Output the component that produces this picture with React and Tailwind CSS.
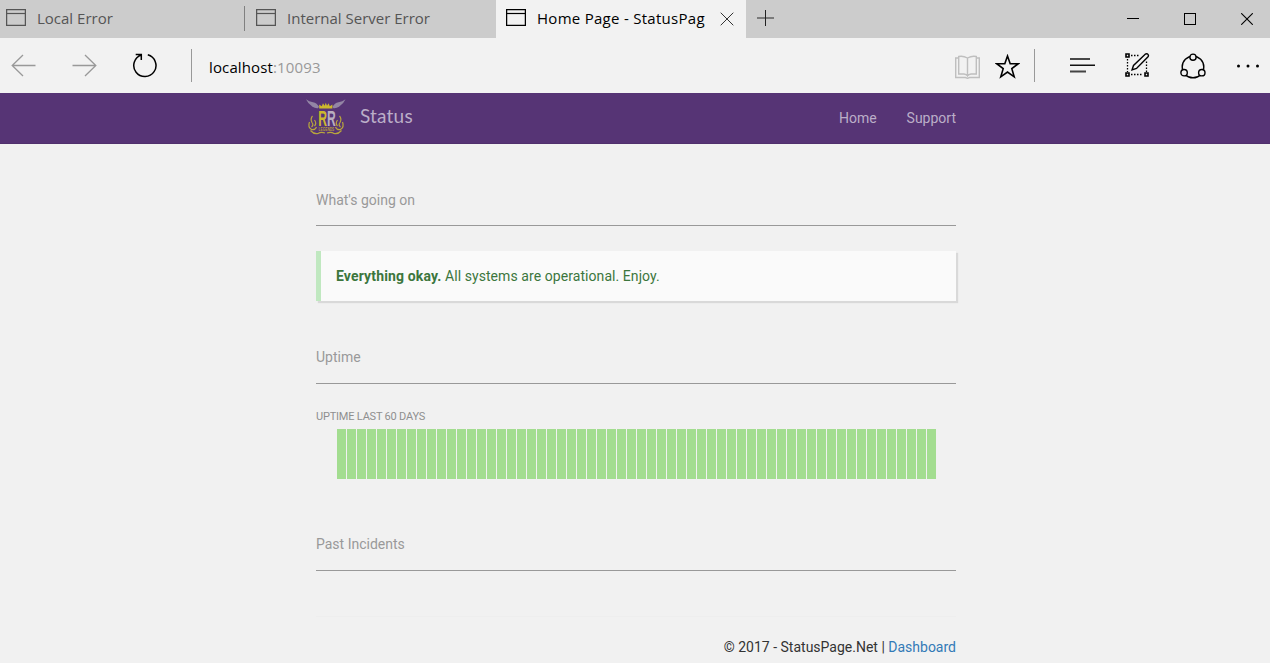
import React from 'react';

const WindowIcon = ({ className }) => (
  <svg className={className} width="20" height="17" viewBox="0 0 20 17" fill="none" stroke="currentColor">
    <rect x="0.6" y="0.6" width="18.8" height="15.8" strokeWidth="1.3" />
    <path d="M0 4.5H20" strokeWidth="1.2" />
  </svg>
);

function TabBar() {
  return (
    <div className="flex h-[38px] bg-[#cccccc] text-[15px] leading-[36px] text-[#555555]">
      <div className="flex w-[245px] items-start">
        <WindowIcon className="ml-[6px] mt-[9px] shrink-0" />
        <span className="ml-[11px] whitespace-nowrap">Local Error</span>
        <div className="ml-auto mt-[6px] h-[25px] w-px bg-[#808080]" />
      </div>
      <div className="flex w-[251px] items-start">
        <WindowIcon className="ml-[11px] mt-[9px] shrink-0" />
        <span className="ml-[11px] whitespace-nowrap">Internal Server Error</span>
      </div>
      <div className="flex w-[250px] items-start bg-[#f2f2f2] text-black">
        <WindowIcon className="ml-[10px] mt-[9px] shrink-0" />
        <span className="ml-[11px] w-[169px] overflow-hidden whitespace-nowrap tracking-[0.28px]">Home Page - StatusPag</span>
        <svg className="ml-[14px] mt-[12px] shrink-0" width="14" height="14" viewBox="0 0 14 14" stroke="#333">
          <path d="M.7 .7L13.3 13.3M13.3 .7L.7 13.3" />
        </svg>
      </div>
      <svg className="ml-[11px] mt-[10px]" width="17" height="16" viewBox="0 0 17 16" stroke="#333">
        <path d="M0 8H17" stroke="#666" strokeWidth="1.6" />
        <path d="M8.5 0V16" stroke="#222" />
      </svg>
      <div className="ml-auto flex items-center pr-[17px] text-black">
        <svg width="12" height="12" viewBox="0 0 12 12" stroke="currentColor"><path d="M0 5.5H12" /></svg>
        <svg className="ml-[45px]" width="12" height="12" viewBox="0 0 12 12" fill="none" stroke="currentColor">
          <rect x=".5" y=".5" width="11" height="11" />
        </svg>
        <svg className="ml-[45px]" width="12" height="12" viewBox="0 0 12 12" stroke="currentColor" strokeWidth="1.1">
          <path d="M.2 .2L11.8 11.8M11.8 .2L.2 11.8" />
        </svg>
      </div>
    </div>
  );
}

function Toolbar() {
  return (
    <div className="flex h-[55px] items-center bg-[#f2f2f2]">
      <svg className="ml-[11px]" width="25" height="23" viewBox="0 0 25 23" fill="none" stroke="#999" strokeWidth="1.3">
        <path d="M24.5 11.5H1.2M12 1L1.2 11.5L12 22" />
      </svg>
      <svg className="ml-9" width="25" height="23" viewBox="0 0 25 23" fill="none" stroke="#999" strokeWidth="1.3">
        <path d="M.5 11.5H23.8M13 1L23.8 11.5L13 22" />
      </svg>
      <svg className="ml-[35px]" width="26" height="26" viewBox="0 0 26 26" fill="none" stroke="#000" strokeWidth="1.5">
        <path d="M15.8 1.8A11.1 11.1 0 1 1 9.3 2M3.7 1.5H9.3V7" />
      </svg>
      <div className="ml-[33px] h-[33px] w-px bg-[#999999]" />
      <div className="ml-[17px] mt-[3px] text-[15px] leading-5 tracking-[0.13px] text-[#999999]">
        <span className="text-black">localhost</span>:10093
      </div>
      <div className="ml-auto flex items-center">
        <svg className="mt-[2px]" width="25" height="24" viewBox="0 0 25 24" fill="none" stroke="#bfbfbf" strokeWidth="1.4">
          <path d="M3.5 3H.7V22.5H10.5L12.5 23.3L14.5 22.5H24.3V3H21.5" />
          <path d="M12.5 3Q8 .5 3.7 1.5V19H9Q11.5 19.3 12.5 21Q13.5 19.3 16 19H21.3V1.5Q17 .5 12.5 3ZM12.5 3V21" />
        </svg>
        <svg className="ml-[15px] mt-[2px]" width="25" height="25" viewBox="0 0 25 25" fill="none" stroke="#000" strokeWidth="1.6">
          <path d="M12.5 2L15.2 9.7H23.3L16.8 14.6L19.2 22.8L12.5 18L5.8 22.8L8.2 14.6L1.7 9.7H9.8Z" />
        </svg>
        <div className="ml-[14px] h-[33px] w-px bg-[#999999]" />
        <svg className="ml-[35px] mt-[-1px]" width="25" height="17" viewBox="0 0 25 17" stroke="#111" strokeWidth="1.6">
          <path d="M0 2H20M0 8.3H25" /><path d="M0 14.5H16" stroke="#444" strokeWidth="2" />
        </svg>
        <svg className="ml-[30px]" width="25" height="25" viewBox="0 0 25 25" fill="none" stroke="#000">
          <path d="M6 2.5H15M2.5 6V19M6 21.5H18M21.5 8.5V19" strokeDasharray="1.5 1.5" strokeWidth="1.3" />
          <path d="M1 1H4V4H1ZM1 20H4V23H1ZM20 20H23V23H20Z" strokeWidth="1.6" />
          <path d="M7 17L8.5 12.5L20.2 1.2Q22 .2 23 1.4Q24 2.5 22.8 4L11.5 15.5Z" strokeWidth="1.4" fill="#f2f2f2" />
        </svg>
        <svg className="ml-[30px]" width="26" height="26" viewBox="0 0 26 26" fill="none" stroke="#000" strokeWidth="1.4">
          <circle cx="13" cy="14" r="10.8" />
          <g fill="#f2f2f2"><circle cx="13" cy="4.2" r="3.1" /><circle cx="4.1" cy="19.7" r="3.2" /><circle cx="21.8" cy="19.7" r="3.2" /></g>
        </svg>
        <svg className="ml-[30px] mr-[10px]" width="24" height="4" viewBox="0 0 24 4">
          <circle cx="2.5" cy="2" r="1.5" /><circle cx="12" cy="2" r="1.5" /><circle cx="21.5" cy="2" r="1.5" />
        </svg>
      </div>
    </div>
  );
}

function Logo() {
  return (
    <svg width="40" height="37" viewBox="0 0 40 37">
      <g fill="#9385a5">
        <path d="M0 .3Q3 2.8 7 3.2Q11 4 13 7.8L12 9.2Q9 9.5 6.5 7.8Q2 5 0 .3Z" />
        <path d="M39.5 .3Q36.5 2.8 32.5 3.2Q28.5 4 26.5 7.8L27.5 9.2Q30.5 9.5 33 7.8Q37.5 5 39.5 .3Z" />
      </g>
      <path d="M13.2 9.5V5.5L15.8 7.3L17 4.3L18.6 6.7L19.8 3.8L21 6.7L22.6 4.3L23.8 7.3L26.4 5.5V9.5Z" fill="#ccb82e" />
      <text x="12.2" y="26.5" fontFamily="Liberation Sans" fontWeight="700" fontSize="22.5" textLength="17.5" lengthAdjust="spacingAndGlyphs" fill="#ccb82e">
        R<tspan fill="#b9aebf">R</tspan>
      </text>
      <text x="12.6" y="31.8" fontFamily="Liberation Sans" fontWeight="700" fontSize="5.8" textLength="15.6" lengthAdjust="spacingAndGlyphs" fill="#b59e3d">LEGENDS</text>
      <g fill="none" stroke="#b8a63c" strokeWidth="1.2">
        <path d="M6.5 17Q4 20 6 23.5Q8 26 5.5 28M3.5 23Q1.5 28 5.5 30.5Q9 31.5 10.5 28M8.5 21Q11 24.5 8.5 27M4.5 31.5Q8 35.5 12 34.5Q15 32.5 19 34" />
        <path d="M33.5 17Q36 20 34 23.5Q32 26 34.5 28M36.5 23Q38.5 28 34.5 30.5Q31 31.5 29.5 28M31.5 21Q29 24.5 31.5 27M35.5 31.5Q32 35.5 28 34.5Q25 32.5 21 34" />
      </g>
    </svg>
  );
}

const SectionTitle = ({ children }) => (
  <h2 className="h-[37px] border-b border-[#999999] text-[14px] leading-5 text-[#999999]">{children}</h2>
);

export default function App() {
  return (
    <div className="h-[663px] w-[1270px] overflow-hidden bg-[#f1f1f1] font-['Open_Sans',sans-serif]">
      <TabBar />
      <Toolbar />
      <div className="font-['Roboto',sans-serif] text-[14px] leading-5">
        <nav className="flex h-[51px] items-start border-b border-[#50306d] bg-[#563475] pl-[306px] pr-[314px] pt-[6px] text-[#bbaec8]">
          <Logo />
          <span className="ml-[14px] mt-[4px] font-['Lato',sans-serif] text-[19px] leading-[26px] tracking-[0.2px]">Status</span>
          <div className="ml-auto mt-[9px] flex gap-[30px]">
            <a>Home</a>
            <a>Support</a>
          </div>
        </nav>
        <main className="ml-[316px] w-[640px] pt-[46px]">
          <h2 className="h-[36px] border-b border-[#999999] text-[14px] leading-5 text-[#999999]">What's going on</h2>
          <div className="mt-[25px] h-[50px] border-l-[5px] border-[#c0e8c0] bg-[#fafafa] pl-[15px] pt-[15px] tracking-[0.07px] text-[#3c763d] shadow-[2px_2px_1px_#d9d9d9]">
            <strong className="font-bold tracking-[0.15px]">Everything okay.</strong> All systems are operational. Enjoy.
          </div>
          <div className="mt-[46px]"><SectionTitle>Uptime</SectionTitle></div>
          <div className="mt-[25px] text-[11px] leading-4 tracking-[-0.2px] text-[#8f8f8f]">UPTIME LAST 60 DAYS</div>
          <div className="ml-[21px] mt-1 flex h-[50px] gap-px">
            {Array.from({ length: 60 }, (_, i) => (
              <div key={i} className="w-[9px] bg-[#a3dd90]" />
            ))}
          </div>
          <div className="mt-[55px]"><SectionTitle>Past Incidents</SectionTitle></div>
          <footer className="mt-[45px] border-t border-[#eeeeee] pt-5 text-right text-[#333333]">
            © 2017 - StatusPage.Net | <a className="text-[#337ab7]">Dashboard</a>
          </footer>
        </main>
      </div>
    </div>
  );
}
